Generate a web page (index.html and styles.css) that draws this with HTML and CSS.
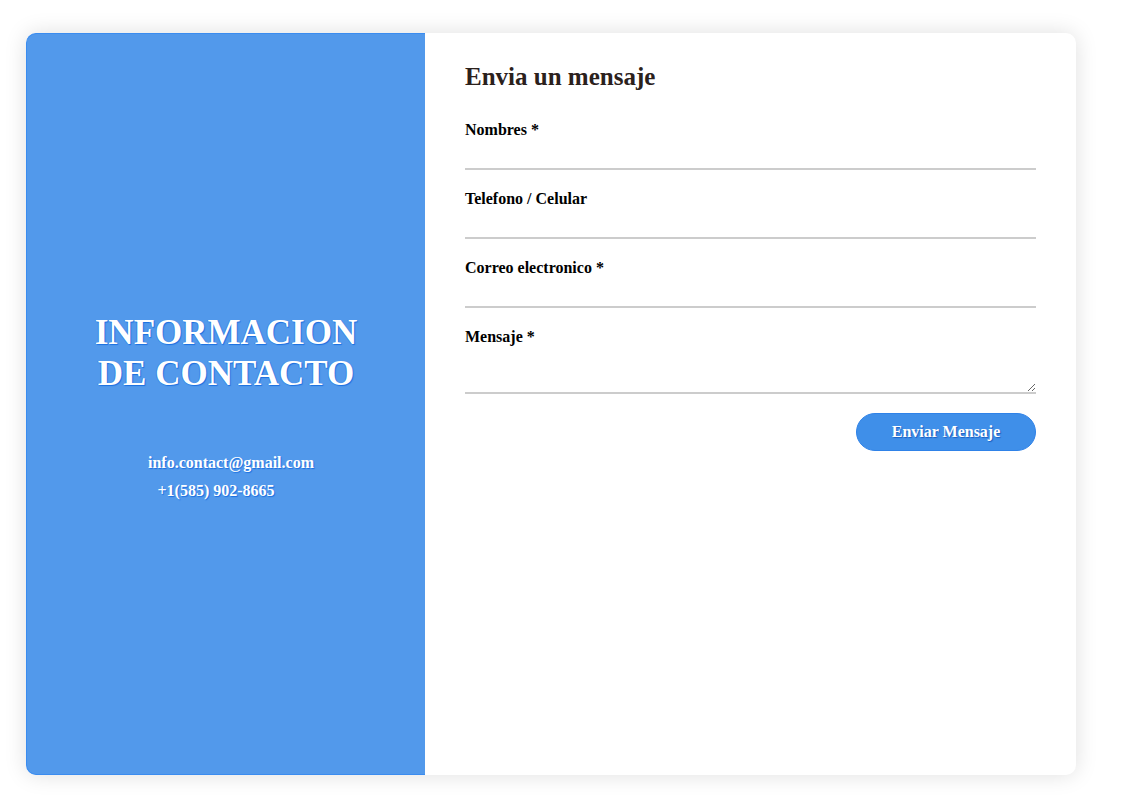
FILE: index.html
```html
<!DOCTYPE html>
<html lang="es">
<head>
<meta charset="utf-8">
<title>Contacto</title>
<link rel="stylesheet" href="styles.css">
</head>
<body>
<div class="card">
  <aside class="info">
    <h1 class="info-title">INFORMACION<br>DE CONTACTO</h1>
    <p class="info-line email">info.contact@gmail.com</p>
    <p class="info-line phone">+1(585) 902-8665</p>
  </aside>
  <section class="form-side">
    <h2 class="form-title">Envia un mensaje</h2>
    <form class="form">
      <label class="field">
        <span class="label">Nombres *</span>
        <input class="input" type="text">
      </label>
      <label class="field">
        <span class="label">Telefono / Celular</span>
        <input class="input" type="text">
      </label>
      <label class="field">
        <span class="label">Correo electronico *</span>
        <input class="input" type="text">
      </label>
      <label class="field">
        <span class="label">Mensaje *</span>
        <textarea class="input textarea"></textarea>
      </label>
      <div class="actions">
        <button class="btn" type="button">Enviar Mensaje</button>
      </div>
    </form>
  </section>
</div>
</body>
</html>
```
FILE: styles.css
```css
* { box-sizing: border-box; }
html, body { margin: 0; padding: 0; background: #fff; }
body {
  font-family: "Liberation Serif", "Times New Roman", serif;
  padding: 33px 0 0 26px;
  width: 1127px;
  height: 797px;
  overflow: hidden;
}
.card {
  width: 1050px;
  height: 742px;
  display: flex;
  border-radius: 10px;
  background: #fff;
  box-shadow: 0 0 22px rgba(0,0,0,0.13);
}
.info {
  width: 399px;
  flex: none;
  background: #5299eb;
  border: 1px solid #3a8cf0;
  border-right: none;
  border-radius: 10px 0 0 10px;
  color: #fff;
  display: flex;
  flex-direction: column;
  align-items: center;
  padding-top: 278px;
}
.info-title {
  margin: 0 0 55px;
  font-size: 35px;
  line-height: 41px;
  font-weight: bold;
  text-align: center;
  text-shadow: 1px 1px 1px #1a6fe0, -1px 0 0 rgba(26,111,224,0.5);
}
.info-line {
  margin: 0;
  font-size: 16px;
  font-weight: bold;
  line-height: 28px;
  text-shadow: 1px 1px 1px #1a6fe0;
}
.email { padding-left: 10px; }
.phone { padding-right: 20px; }
.form-side {
  flex: 1;
  padding: 30px 40px 0 40px;
}
.form-title {
  margin: 0 0 30px;
  font-size: 25px;
  line-height: 28px;
  font-weight: bold;
  color: #2b211c;
}
.form { display: flex; flex-direction: column; }
.field {
  display: flex;
  flex-direction: column;
  margin-bottom: 20px;
}
.label {
  font-size: 16px;
  font-weight: bold;
  color: #000;
  line-height: 18px;
}
.input {
  border: none;
  border-bottom: 2px solid #ccc;
  outline: none;
  height: 31px;
  padding: 0;
  font-family: inherit;
  font-size: 16px;
  background: transparent;
}
.textarea {
  height: 48px;
  resize: vertical;
}
.field:last-of-type { margin-bottom: 19px; }
.actions { display: flex; justify-content: flex-end; }
.btn {
  width: 180px;
  height: 38px;
  border: 1px solid #2f82e8;
  border-radius: 20px;
  background: #3f8fe9;
  color: #fff;
  font-family: inherit;
  font-size: 16px;
  font-weight: bold;
  text-shadow: 1px 1px 1px #1a5fc0;
  cursor: pointer;
}
```
